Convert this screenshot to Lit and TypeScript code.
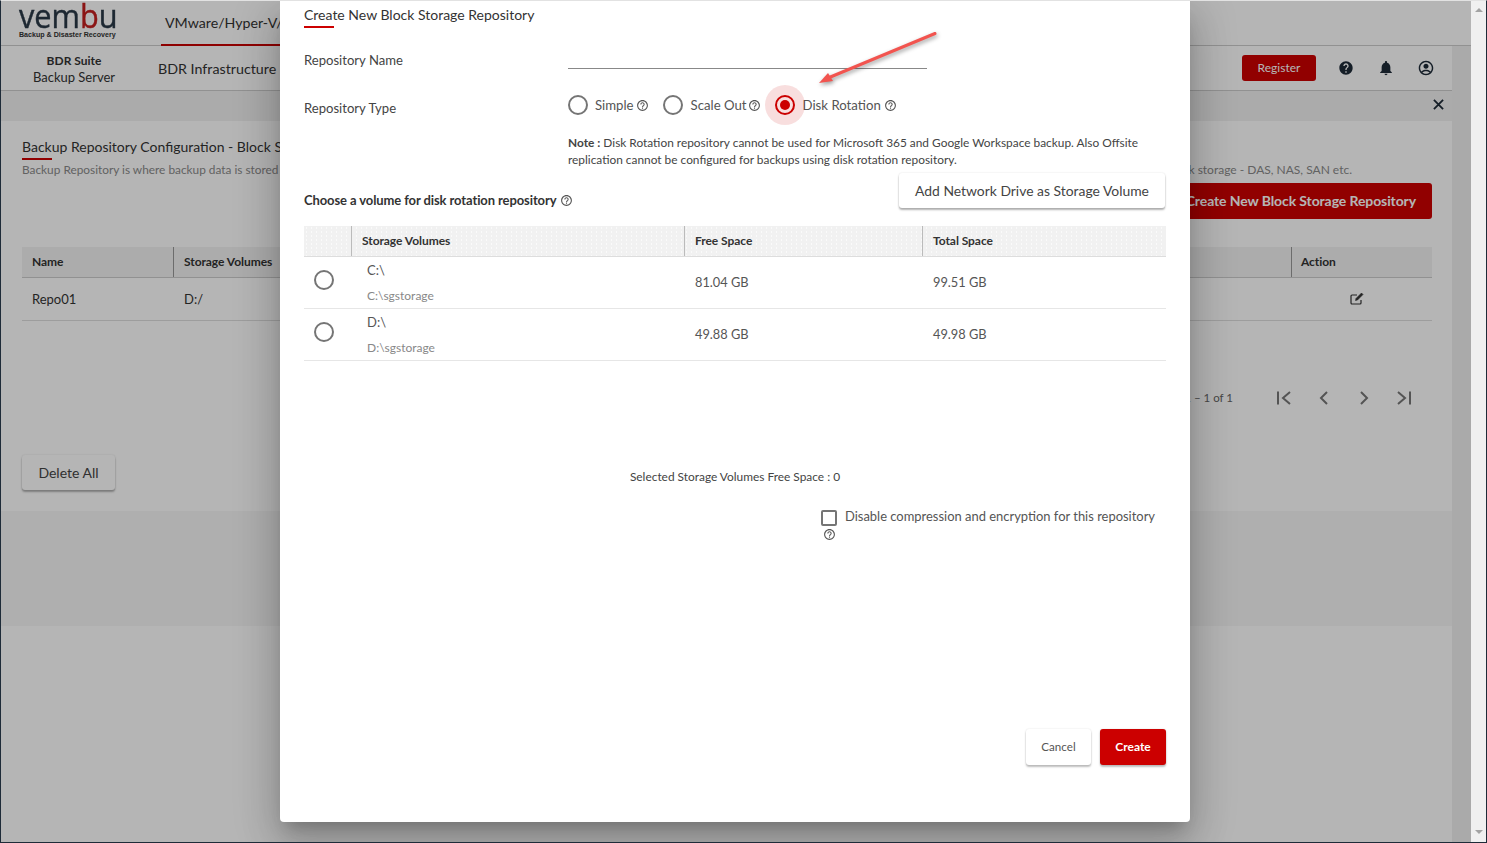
import { LitElement, html, css, svg } from "lit";
import { customElement } from "lit/decorators.js";

const helpOutline = html`<svg class="help" viewBox="0 0 24 24"><path d="M11 18h2v-2h-2v2zm1-16C6.48 2 2 6.48 2 12s4.48 10 10 10 10-4.48 10-10S17.52 2 12 2zm0 18c-4.41 0-8-3.59-8-8s3.59-8 8-8 8 3.59 8 8-3.59 8-8 8zm0-14c-2.21 0-4 1.79-4 4h2c0-1.1.9-2 2-2s2 .9 2 2c0 2-3 1.75-3 5h2c0-2.25 3-2.5 3-5 0-2.21-1.79-4-4-4z"/></svg>`;

@customElement("app-root")
export class AppRoot extends LitElement {
  static styles = css`
    :host { display: block; font-family: Lato, "Liberation Sans", sans-serif; color: #333; }
    * { box-sizing: border-box; }
    .window { width: 1487px; height: 843px; display: flex; border-top: 1px solid #e2e2e2; border-left: 1px solid #1e2b38; border-right: 1px solid #1e2b38; border-bottom: 1px solid #1e2b38; background: #fff; overflow: hidden; }
    .app { position: relative; flex: 1; min-width: 0; display: flex; flex-direction: column; background: #fff; }
    .scrollbar { width: 15px; background: #f0f0f0; display: flex; flex-direction: column; justify-content: space-between; align-items: center; padding: 7px 0 8px; }
    .arrow-up { width: 0; height: 0; border: 4px solid transparent; border-top: 0; border-bottom: 4px solid #a3a3a3; }
    .arrow-down { width: 0; height: 0; border: 4px solid transparent; border-bottom: 0; border-top: 4px solid #a3a3a3; }

    .top { height: 45px; flex: none; border-bottom: 1px solid #ccc; display: flex; background: #fff; }
    .logo { width: 160px; flex: none; padding: 0 0 0 18px; }
    .logo-word { display: block; font-family: "Open Sans", sans-serif; font-size: 32px; line-height: 30px; color: #2a3947; transform: scaleX(.96); transform-origin: left; white-space: nowrap; -webkit-text-stroke: .4px #2a3947; }
    .logo-word b { font-weight: 400; color: #c41f1f; -webkit-text-stroke: .4px #c41f1f; }
    .logo-tag { display: block; font-family: "Liberation Sans", sans-serif; font-weight: 700; font-size: 7.1px; line-height: 9px; color: #333; white-space: nowrap; }
    .tab { width: 300px; padding: 13px 0 0 4px; font-size: 14.2px; line-height: 18px; border-bottom: 2px solid #c80000; height: 45px; color: #333; white-space: nowrap; }

    .body { flex: 1; display: flex; min-height: 0; }
    .main { flex: 1; min-width: 0; display: flex; flex-direction: column; }
    .inner-track { width: 19px; background: #f0f0f0; flex: none; }

    .subnav { height: 45px; flex: none; border-bottom: 1px solid #ccc; display: flex; align-items: center; padding-right: 18px; }
    .brand { width: 146px; text-align: center; font-size: 13px; line-height: 16px; flex: none; padding-top: 2px; }
    .brand b { display: block; font-weight: 700; font-size: 12px; }
    .infra { margin-left: 11px; font-size: 14.25px; flex: 1; white-space: nowrap; padding-top: 1px; }
    .register { width: 74px; height: 26px; background: #cc0000; color: #fff; border-radius: 3px; font-size: 12px; display: flex; align-items: center; justify-content: center; padding-bottom: 2px; }
    .nav-icons { display: flex; margin-left: 22px; gap: 24px; align-items: center; }
    .nav-icons svg { width: 16px; height: 16px; fill: #1e2b38; display: block; }
    .stripe { height: 30px; flex: none; background: #f1f1f1; display: flex; justify-content: flex-end; align-items: center; padding: 0 8px 4px 0; }
    .stripe svg { width: 11px; height: 11px; stroke: #1e2b38; stroke-width: 2; display: block; }

    .content { flex: 1; display: flex; flex-direction: column; min-height: 0; }
    .pad { padding: 0 20px 0 21px; }
    .pg-title { font-size: 14px; line-height: 18px; padding-top: 17px; white-space: nowrap; }
    .rule { width: 30px; height: 2px; background: #cc0000; margin-top: 2px; }
    .pg-desc { display: flex; justify-content: space-between; padding-right: 80px; font-size: 12px; line-height: 16px; color: #8a8a8a; margin-top: 2px; white-space: nowrap; }
    .pg-desc .lead { font-size: 11.85px; }
    .pg-actions { display: flex; justify-content: flex-end; margin-top: 5px; }
    .primary-lg { height: 36px; width: 380px; background: #cc0000; color: #fff; border-radius: 3px; font-size: 14px; font-weight: 700; letter-spacing: -0.1px; display: flex; align-items: center; justify-content: flex-end; padding: 0 16px 2px 0; white-space: nowrap; }

    .grid-head { margin-top: 28px; display: grid; grid-template-columns: 151px 1118px 141px; height: 31px; background: #f2f2f2; border-bottom: 1px solid #ccc; font-size: 12px; font-weight: 700; letter-spacing: -0.05px; color: #333; }
    .grid-head div { padding-left: 10px; line-height: 29px; height: 30px; border-left: 1px solid #999; }
    .grid-head div:first-child { border-left: 0; }
    .grid-head div:last-child { padding-left: 9px; }
    .grid-row { display: grid; grid-template-columns: 151px 1118px 141px; height: 43px; border-bottom: 1px solid #ddd; font-size: 13px; align-items: center; padding-bottom: 1px; }
    .grid-row > div { padding-left: 10px; }
    .grid-row .d { padding-left: 11px; }
    .edit { display: flex; justify-content: center; padding-left: 0 !important; padding-right: 10px; }
    .edit svg { width: 14px; height: 13px; stroke: #333; fill: none; display: block; }

    .pager { display: flex; justify-content: flex-end; align-items: center; height: 22px; margin-top: 66px; padding-right: 20px; font-size: 11.5px; color: #666; }
    .pager .count { margin-right: 43px; white-space: nowrap; padding-bottom: 2px; }
    .pager svg { width: 16px; height: 16px; fill: none; stroke: #777; stroke-width: 2; display: block; margin-left: 24px; }
    .pager svg:first-of-type { margin-left: 0; }
    .delete-row { margin-top: 46px; }
    .delete { width: 93px; height: 35px; background: #fff; border-radius: 3px; box-shadow: 0 2px 2px rgba(0,0,0,.3), 0 0 2px rgba(0,0,0,.12); display: flex; align-items: center; justify-content: center; font-size: 14px; color: #444; }
    .band { height: 115px; margin-top: 21px; background: #f7f7f7; flex: none; }

    .overlay { position: absolute; inset: 0; background: rgba(0,0,0,.29); }
    .modal { position: absolute; left: 279px; top: 0; width: 910px; height: 821px; background: #fff; border-radius: 0 0 4px 4px; box-shadow: 0 11px 15px -7px rgba(0,0,0,.2), 0 24px 38px 3px rgba(0,0,0,.14), 0 9px 46px 8px rgba(0,0,0,.12); padding: 0 24px 57px; display: flex; flex-direction: column; color: #444; }
    .m-title { padding-top: 4px; font-size: 14px; line-height: 20px; color: #333; }
    .m-rule { width: 30px; height: 2px; background: #cc0000; margin-top: 1px; }
    .form-row { display: grid; grid-template-columns: 264px 1fr; }
    .label { font-size: 13.1px; line-height: 20px; color: #444; }
    .name-row .label { padding-top: 22px; }
    .input { width: 359px; height: 41px; border-bottom: 1px solid #888; }
    .type-row { margin-top: 15px; }
    .type-row .label { padding-top: 13px; }
    .options { display: flex; align-items: center; height: 40px; font-size: 13.2px; color: #555; }
    .radio { width: 20px; height: 20px; border-radius: 50%; border: 2px solid #757575; flex: none; position: relative; background: #fff; }
    .radio.on { border-color: #cc0000; background: transparent; }
    .radio.on::after { content: ""; position: absolute; left: 3px; top: 3px; width: 10px; height: 10px; border-radius: 50%; background: #cc0000; }
    .radio.on::before { content: ""; position: absolute; left: -12px; top: -12px; width: 40px; height: 40px; border-radius: 50%; background: rgba(204,0,0,.13); }
    .opt { display: flex; align-items: center; margin-right: 14px; }
    .opt span { margin-left: 7px; white-space: nowrap; }
    .opt.gap8 span { margin-left: 8px; }
    .help { width: 13px; height: 13px; fill: #555; flex: none; display: block; }
    .opt .help { margin-left: 2px; }
    .opt.scale .help { margin-left: 1px; }
    .opt.disk .help { margin-left: 3px; }
    .note { margin: 9px 0 0 264px; font-size: 11.88px; line-height: 17px; color: #444; }
    .note b { font-weight: 700; }
    .choose-row { display: flex; justify-content: space-between; margin-top: 5px; height: 35px; }
    .choose { display: flex; align-items: center; gap: 4px; height: 20px; margin-top: 17px; font-size: 13px; font-weight: 700; letter-spacing: -0.1px; color: #333; }
    .add { width: 266px; height: 35px; margin-right: 1px; background: #fff; border-radius: 3px; box-shadow: 0 2px 2px rgba(0,0,0,.3), 0 0 2px rgba(0,0,0,.12); font-size: 13.9px; color: #444; display: flex; align-items: center; justify-content: center; }
    .vol-head, .vol-row { display: grid; grid-template-columns: 47px 333px 238px 1fr; }
    .vol-head { margin-top: 18px; height: 31px; border-bottom: 1px solid #ddd; background-color: #f1f1f1; background-image: radial-gradient(circle, #fafafa .6px, transparent .7px); background-size: 5px 4px; font-size: 12px; font-weight: 700; letter-spacing: -0.05px; color: #333; }
    .vol-head div { border-left: 1px solid #bbb; padding-left: 10px; line-height: 29px; height: 30px; }
    .vol-head div:first-child { border-left: 0; }
    .vol-row { height: 52px; border-bottom: 1px solid #e6e6e6; font-size: 12.8px; color: #555; align-items: center; }
    .vol-radio { padding-left: 10px; padding-bottom: 6px; }
    .vol-name { padding-left: 16px; align-self: start; line-height: 16px; padding-top: 5px; font-size: 13px; }
    .vol-name small { display: block; margin-top: 10px; font-size: 12px; color: #888; }
    .vol-row .v { padding-left: 11px; padding-bottom: 2px; }
    .selected { margin-top: 108px; font-size: 11.9px; line-height: 16px; text-align: center; color: #444; }
    .chk-box { margin: 23px 0 0 517px; font-size: 12.95px; line-height: 16px; color: #555; }
    .chk-line { display: flex; }
    .chk { width: 16px; height: 16px; border: 2px solid #757575; border-radius: 2px; margin: 2px 8px 0 0; flex: none; }
    .chk-box .help { margin: 2px 0 0 2px; width: 13px; height: 13px; }
    .footer { margin-top: auto; display: flex; justify-content: flex-end; gap: 9px; }
    .btn { width: 66px; height: 36px; border-radius: 3px; font-size: 12px; display: flex; align-items: center; justify-content: center; padding-bottom: 1px; box-shadow: 0 2px 2px rgba(0,0,0,.25), 0 0 2px rgba(0,0,0,.12); }
    .cancel { background: #fff; color: #555; width: 65px; font-size: 11.6px; }
    .create { background: #cc0000; color: #fff; font-weight: 700; }
    .pointer { position: absolute; left: 800px; top: 20px; width: 150px; height: 80px; overflow: visible; filter: drop-shadow(1px 2px 2px rgba(0,0,0,.4)); }
  `;

  render() {
    return html`
      <div class="window">
        <div class="app">
          <header class="top">
            <div class="logo">
              <span class="logo-word">vem<b>b</b>u</span>
              <span class="logo-tag">Backup &amp; Disaster Recovery</span>
            </div>
            <div class="tab">VMware/Hyper-V/AHV</div>
          </header>
          <div class="body">
            <div class="main">
              <nav class="subnav">
                <div class="brand"><b>BDR Suite</b>Backup Server</div>
                <div class="infra">BDR Infrastructure</div>
                <div class="register">Register</div>
                <div class="nav-icons">
                  <svg viewBox="0 0 24 24"><path d="M12 2C6.48 2 2 6.48 2 12s4.48 10 10 10 10-4.48 10-10S17.52 2 12 2zm1 17h-2v-2h2v2zm2.07-7.75l-.9.92C13.45 12.9 13 13.5 13 15h-2v-.5c0-1.1.45-2.1 1.17-2.83l1.24-1.26c.37-.36.59-.86.59-1.41 0-1.1-.9-2-2-2s-2 .9-2 2H8c0-2.21 1.79-4 4-4s4 1.79 4 4c0 .88-.36 1.68-.93 2.25z"/></svg>
                  <svg viewBox="2 1 20 22"><path d="M12 22c1.1 0 2-.9 2-2h-4c0 1.1.89 2 2 2zm6-6v-5c0-3.07-1.64-5.64-4.5-6.32V4c0-.83-.67-1.5-1.5-1.5s-1.5.67-1.5 1.5v.68C7.63 5.36 6 7.92 6 11v5l-2 2v1h16v-1l-2-2z"/></svg>
                  <svg viewBox="1 1 22 22"><path d="M12 2C6.48 2 2 6.48 2 12s4.48 10 10 10 10-4.48 10-10S17.52 2 12 2zM7.07 18.28c.43-.9 3.05-1.78 4.93-1.78s4.51.88 4.93 1.78C15.57 19.36 13.86 20 12 20s-3.57-.64-4.93-1.72zm11.29-1.45c-1.43-1.74-4.9-2.33-6.36-2.33s-4.93.59-6.36 2.33C4.62 15.49 4 13.82 4 12c0-4.41 3.59-8 8-8s8 3.59 8 8c0 1.82-.62 3.49-1.64 4.83zM12 6c-1.94 0-3.5 1.56-3.5 3.5S10.06 13 12 13s3.5-1.56 3.5-3.5S13.94 6 12 6z"/></svg>
                </div>
              </nav>
              <div class="stripe">
                <svg viewBox="0 0 12 12"><path d="M1 1l10 10M11 1L1 11"/></svg>
              </div>
              <div class="content">
                <div class="pad">
                  <div class="pg-title">Backup Repository Configuration - Block Storage</div>
                  <div class="rule"></div>
                  <div class="pg-desc"><span class="lead">Backup Repository is where backup data is stored</span><span>block storage - DAS, NAS, SAN etc.</span></div>
                  <div class="pg-actions"><div class="primary-lg">Create New Block Storage Repository</div></div>
                  <div class="grid-head"><div>Name</div><div>Storage Volumes</div><div>Action</div></div>
                  <div class="grid-row">
                    <div>Repo01</div><div class="d">D:/</div>
                    <div class="edit"><svg viewBox="0 0 14 13"><path d="M11 8v3a1 1 0 0 1-1 1H2a1 1 0 0 1-1-1V4a1 1 0 0 1 1-1h5" stroke-width="1.2"/><path d="M5.5 8.5l.5-2L11.5 1l1.5 1.5L7.5 8z" fill="#333" stroke-width=".6"/></svg></div>
                  </div>
                  <div class="pager">
                    <span class="count">1 – 1 of 1</span>
                    <svg viewBox="0 0 16 16"><path d="M2 1.5v13M14 2L7 8l7 6"/></svg>
                    <svg viewBox="0 0 16 16"><path d="M11 2L5 8l6 6"/></svg>
                    <svg viewBox="0 0 16 16"><path d="M5 2l6 6-6 6"/></svg>
                    <svg viewBox="0 0 16 16"><path d="M2 2l7 6-7 6M14 1.5v13"/></svg>
                  </div>
                  <div class="delete-row"><div class="delete">Delete All</div></div>
                </div>
                <div class="band"></div>
              </div>
            </div>
            <div class="inner-track"></div>
          </div>
          <div class="overlay"></div>
          <section class="modal">
            <div class="m-title">Create New Block Storage Repository</div>
            <div class="m-rule"></div>
            <div class="form-row name-row">
              <div class="label">Repository Name</div>
              <div class="input"></div>
            </div>
            <div class="form-row type-row">
              <div class="label">Repository Type</div>
              <div class="options">
                <div class="opt"><div class="radio"></div><span>Simple</span>${helpOutline}</div>
                <div class="opt scale gap8"><div class="radio"></div><span>Scale Out</span>${helpOutline}</div>
                <div class="opt disk gap8"><div class="radio on"></div><span>Disk Rotation</span>${helpOutline}</div>
              </div>
            </div>
            <div class="note"><b>Note :</b> Disk Rotation repository cannot be used for Microsoft 365 and Google Workspace backup. Also Offsite replication cannot be configured for backups using disk rotation repository.</div>
            <div class="choose-row">
              <div class="choose">Choose a volume for disk rotation repository ${helpOutline}</div>
              <div class="add">Add Network Drive as Storage Volume</div>
            </div>
            <div class="vol-head"><div></div><div>Storage Volumes</div><div>Free Space</div><div>Total Space</div></div>
            <div class="vol-row">
              <div class="vol-radio"><div class="radio"></div></div>
              <div class="vol-name">C:\\<small>C:\\sgstorage</small></div>
              <div class="v">81.04 GB</div><div class="v">99.51 GB</div>
            </div>
            <div class="vol-row">
              <div class="vol-radio"><div class="radio"></div></div>
              <div class="vol-name">D:\\<small>D:\\sgstorage</small></div>
              <div class="v">49.88 GB</div><div class="v">49.98 GB</div>
            </div>
            <div class="selected">Selected Storage Volumes Free Space : 0</div>
            <div class="chk-box">
              <div class="chk-line"><div class="chk"></div><span>Disable compression and encryption for this repository</span></div>
              ${helpOutline}
            </div>
            <div class="footer">
              <div class="btn cancel">Cancel</div>
              <div class="btn create">Create</div>
            </div>
          </section>
          <svg class="pointer" viewBox="0 0 150 80">
            <path d="M134 12.5L27 57" stroke="#f2544f" stroke-width="3" stroke-linecap="round" fill="none"/>
            ${svg`<path d="M18 62L27 52L32 60Z" fill="#f2544f"/>`}
          </svg>
        </div>
        <div class="scrollbar"><div class="arrow-up"></div><div class="arrow-down"></div></div>
      </div>
    `;
  }
}
